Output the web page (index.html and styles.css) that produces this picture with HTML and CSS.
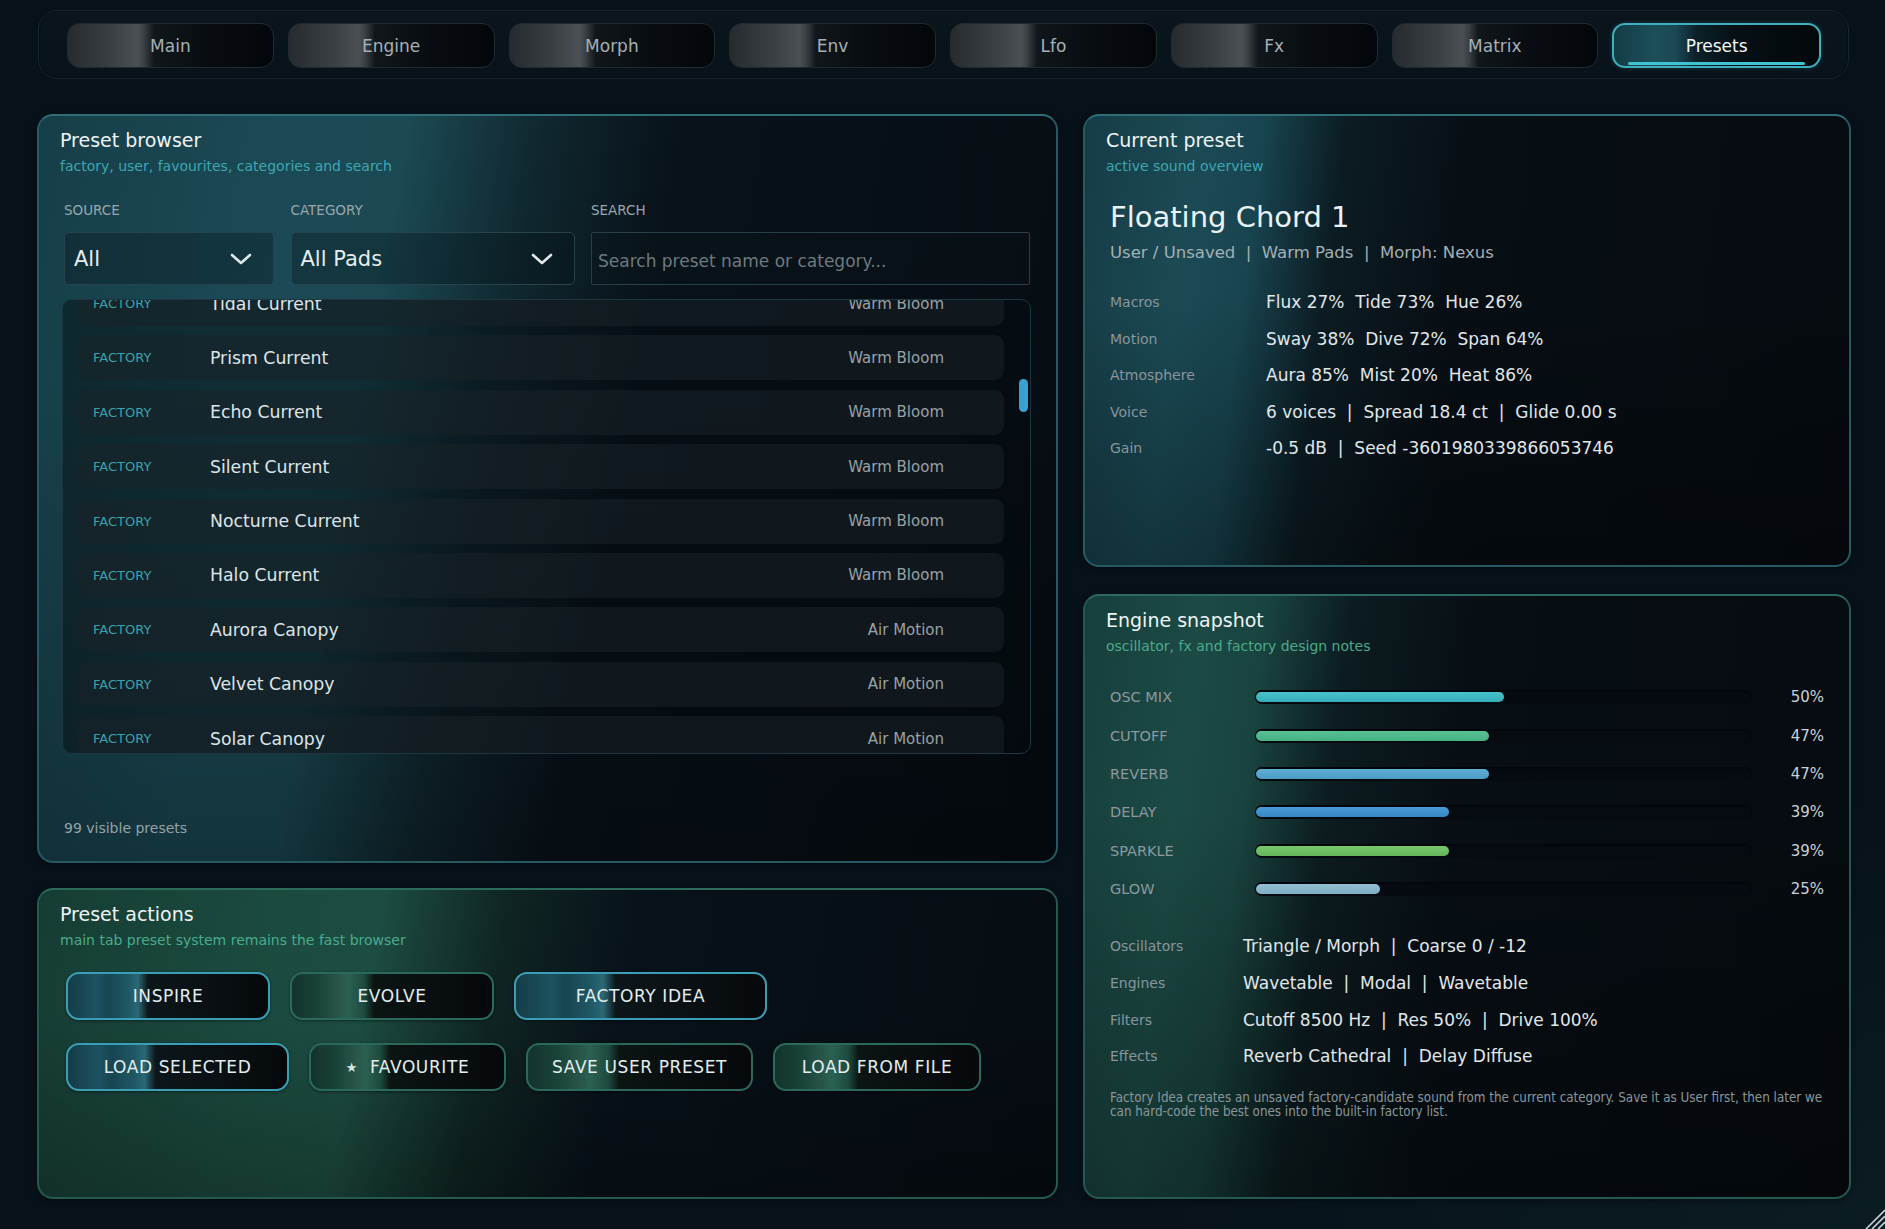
FILE: index.html
```html
<!DOCTYPE html>
<html lang="en">
<head>
<meta charset="utf-8">
<title>Presets</title>
<link rel="stylesheet" href="styles.css">
</head>
<body>
<div class="app">
  <nav class="tabbar">
    <div class="tab">Main</div>
    <div class="tab">Engine</div>
    <div class="tab">Morph</div>
    <div class="tab">Env</div>
    <div class="tab">Lfo</div>
    <div class="tab">Fx</div>
    <div class="tab">Matrix</div>
    <div class="tab active">Presets</div>
  </nav>

  <main class="layout">
    <div class="col col-left">
      <section class="panel browser">
        <h2 class="p-title">Preset browser</h2>
        <p class="p-sub">factory, user, favourites, categories and search</p>

        <div class="filters">
          <div class="field">
            <div class="f-label">SOURCE</div>
            <div class="select"><span>All</span>
              <svg class="chev" viewBox="0 0 22 12" width="22" height="12"><path d="M2 2 L11 10 L20 2" fill="none" stroke="#dfe8ea" stroke-width="2.6" stroke-linecap="round" stroke-linejoin="round"/></svg>
            </div>
          </div>
          <div class="field">
            <div class="f-label">CATEGORY</div>
            <div class="select"><span>All Pads</span>
              <svg class="chev" viewBox="0 0 22 12" width="22" height="12"><path d="M2 2 L11 10 L20 2" fill="none" stroke="#dfe8ea" stroke-width="2.6" stroke-linecap="round" stroke-linejoin="round"/></svg>
            </div>
          </div>
          <div class="field">
            <div class="f-label">SEARCH</div>
            <input class="search" type="text" placeholder="Search preset name or category...">
          </div>
        </div>

        <div class="list">
          <div class="rows">
            <div class="row"><span class="src">FACTORY</span><span class="name">Tidal Current</span><span class="cat">Warm Bloom</span></div>
            <div class="row"><span class="src">FACTORY</span><span class="name">Prism Current</span><span class="cat">Warm Bloom</span></div>
            <div class="row"><span class="src">FACTORY</span><span class="name">Echo Current</span><span class="cat">Warm Bloom</span></div>
            <div class="row"><span class="src">FACTORY</span><span class="name">Silent Current</span><span class="cat">Warm Bloom</span></div>
            <div class="row"><span class="src">FACTORY</span><span class="name">Nocturne Current</span><span class="cat">Warm Bloom</span></div>
            <div class="row"><span class="src">FACTORY</span><span class="name">Halo Current</span><span class="cat">Warm Bloom</span></div>
            <div class="row"><span class="src">FACTORY</span><span class="name">Aurora Canopy</span><span class="cat">Air Motion</span></div>
            <div class="row"><span class="src">FACTORY</span><span class="name">Velvet Canopy</span><span class="cat">Air Motion</span></div>
            <div class="row"><span class="src">FACTORY</span><span class="name">Solar Canopy</span><span class="cat">Air Motion</span></div>
          </div>
          <div class="thumb"></div>
        </div>

        <div class="count">99 visible presets</div>
      </section>

      <section class="panel actions">
        <h2 class="p-title">Preset actions</h2>
        <p class="p-sub green">main tab preset system remains the fast browser</p>
        <div class="btn-grid">
          <div class="btn-row row-a">
            <div class="btn blue">INSPIRE</div>
            <div class="btn green">EVOLVE</div>
            <div class="btn blue">FACTORY IDEA</div>
          </div>
          <div class="btn-row row-b">
            <div class="btn blue">LOAD SELECTED</div>
            <div class="btn green"><span class="star">★</span>FAVOURITE</div>
            <div class="btn green">SAVE USER PRESET</div>
            <div class="btn green">LOAD FROM FILE</div>
          </div>
        </div>
      </section>
    </div>

    <div class="col col-right">
      <section class="panel current">
        <h2 class="p-title">Current preset</h2>
        <p class="p-sub">active sound overview</p>
        <div class="big">Floating Chord 1</div>
        <div class="meta">User / Unsaved  |  Warm Pads  |  Morph: Nexus</div>
        <div class="kv">
          <div class="kv-row"><span class="k">Macros</span><span class="v">Flux 27%  Tide 73%  Hue 26%</span></div>
          <div class="kv-row"><span class="k">Motion</span><span class="v">Sway 38%  Dive 72%  Span 64%</span></div>
          <div class="kv-row"><span class="k">Atmosphere</span><span class="v">Aura 85%  Mist 20%  Heat 86%</span></div>
          <div class="kv-row"><span class="k">Voice</span><span class="v">6 voices  |  Spread 18.4 ct  |  Glide 0.00 s</span></div>
          <div class="kv-row"><span class="k">Gain</span><span class="v">-0.5 dB  |  Seed -3601980339866053746</span></div>
        </div>
      </section>

      <section class="panel engine">
        <h2 class="p-title">Engine snapshot</h2>
        <p class="p-sub green">oscillator, fx and factory design notes</p>
        <div class="bars">
          <div class="bar-row"><span class="b-label">OSC MIX</span><div class="track"><div class="fill c-osc" style="width:50%"></div></div><span class="b-val">50%</span></div>
          <div class="bar-row"><span class="b-label">CUTOFF</span><div class="track"><div class="fill c-cut" style="width:47%"></div></div><span class="b-val">47%</span></div>
          <div class="bar-row"><span class="b-label">REVERB</span><div class="track"><div class="fill c-rev" style="width:47%"></div></div><span class="b-val">47%</span></div>
          <div class="bar-row"><span class="b-label">DELAY</span><div class="track"><div class="fill c-del" style="width:39%"></div></div><span class="b-val">39%</span></div>
          <div class="bar-row"><span class="b-label">SPARKLE</span><div class="track"><div class="fill c-spk" style="width:39%"></div></div><span class="b-val">39%</span></div>
          <div class="bar-row"><span class="b-label">GLOW</span><div class="track"><div class="fill c-glw" style="width:25%"></div></div><span class="b-val">25%</span></div>
        </div>
        <div class="info">
          <div class="info-row"><span class="k">Oscillators</span><span class="v">Triangle / Morph  |  Coarse 0 / -12</span></div>
          <div class="info-row"><span class="k">Engines</span><span class="v">Wavetable  |  Modal  |  Wavetable</span></div>
          <div class="info-row"><span class="k">Filters</span><span class="v">Cutoff 8500 Hz  |  Res 50%  |  Drive 100%</span></div>
          <div class="info-row"><span class="k">Effects</span><span class="v">Reverb Cathedral  |  Delay Diffuse</span></div>
        </div>
        <p class="note">Factory Idea creates an unsaved factory-candidate sound from the current category. Save it as User first, then later we<br>can hard-code the best ones into the built-in factory list.</p>
      </section>
    </div>
  </main>
</div>
<svg class="grip" viewBox="0 0 22 22" width="22" height="22">
  <path d="M22 3 L3 22 M22 9 L9 22 M22 15 L15 22" stroke="#c9d1d5" stroke-width="1.6" fill="none"/>
</svg>
</body>
</html>
```

FILE: styles.css
```css
* { box-sizing: border-box; }

html, body {
  margin: 0;
  padding: 0;
}

body {
  width: 1885px;
  height: 1229px;
  overflow: hidden;
  position: relative;
  background: radial-gradient(60% 50% at 100% 100%, #0b1c22 0%, #07111a 70%), #07111a;
  font-family: "DejaVu Sans", Verdana, sans-serif;
  color: #dfe7ea;
}

.app {
  width: 1885px;
  height: 1229px;
  padding: 10px 34px 0 37px;
  display: flex;
  flex-direction: column;
}

/* ---------- Tabs ---------- */
.tabbar {
  height: 69px;
  margin: 0 2px 0 1px;
  padding: 12px 27px 12px 28px;
  display: flex;
  gap: 14px;
  border: 1px solid #16262e;
  border-radius: 20px;
  background: linear-gradient(180deg, #0a151c 0%, #08121a 100%);
  box-shadow: inset 0 0 0 1px rgba(0, 0, 0, 0.35);
}

.tab {
  flex: 1;
  height: 45px;
  display: flex;
  align-items: center;
  justify-content: center;
  font-size: 17px;
  color: #a6b0b5;
  border: 1px solid #1f2b31;
  border-radius: 13px;
  background: linear-gradient(90deg, #262b2f 0%, #3a4044 22%, #4a5054 34%, #3a4044 37%, #10161a 42%, #080c10 70%, #04070a 100%);
}

.tab.active {
  position: relative;
  color: #f2f8f9;
  border: 2px solid #3cb0be;
  background: linear-gradient(90deg, #143c45 0%, #1c4f5a 20%, #1a4853 30%, #0c2129 40%, #061015 60%, #04080b 100%);
  box-shadow: 0 0 5px rgba(60, 176, 190, 0.25);
}

.tab.active::after {
  content: "";
  position: absolute;
  left: 14px;
  right: 14px;
  bottom: 1px;
  height: 3px;
  border-radius: 2px;
  background: #3fc2d2;
}

/* ---------- Layout ---------- */
.layout {
  margin-top: 35px;
  height: 1085px;
  display: grid;
  grid-template-columns: 1021px 1fr;
  column-gap: 25px;
}

.col {
  display: flex;
  flex-direction: column;
  min-height: 0;
}
.col-left { gap: 25px; }
.col-right { gap: 27px; }

.panel {
  position: relative;
  border-radius: 16px;
  border: 2px solid #265a62;
  border-top-color: #2e6e76;
  padding: 13px 22px 0 21px;
  overflow: hidden;
  box-shadow: 0 2px 6px rgba(0, 0, 0, 0.4);
}

.browser {
  height: 749px;
  flex: none;
  display: flex;
  flex-direction: column;
  background:
    linear-gradient(180deg, rgba(0,0,0,0) 35%, rgba(0,0,0,0.3) 100%),
    linear-gradient(100deg, #163e48 0%, #1b4a56 22%, #1b4a55 32%, #10272f 44%, #08121a 56%, #060c12 100%);
}

.actions {
  flex: 1;
  border-color: #245a4c;
  border-top-color: #2c6a5a;
  background:
    linear-gradient(180deg, rgba(0,0,0,0) 40%, rgba(0,0,0,0.25) 100%),
    linear-gradient(100deg, #163d34 0%, #1b4a3f 22%, #1d4d42 32%, #0f2523 44%, #08121a 56%, #060c12 100%);
}

.current {
  height: 453px;
  flex: none;
  background:
    linear-gradient(180deg, rgba(0,0,0,0) 40%, rgba(0,0,0,0.3) 100%),
    linear-gradient(97deg, #163c46 0%, #1b4a55 14%, #184450 22%, #0c1c23 32%, #070e14 48%, #060b10 100%);
}

.engine {
  flex: 1;
  border-color: #245850;
  border-top-color: #2c6a60;
  background:
    linear-gradient(180deg, rgba(0,0,0,0) 35%, rgba(0,0,0,0.3) 100%),
    linear-gradient(97deg, #173f3c 0%, #1c4a45 14%, #19433f 22%, #0c1c20 32%, #070e14 48%, #060b10 100%);
}

.p-title {
  margin: 0;
  font-size: 19px;
  line-height: 23px;
  font-weight: normal;
  color: #eef4f5;
}

.p-sub {
  margin: 6px 0 0 0;
  font-size: 14px;
  line-height: 17px;
  color: #3fa6b0;
}
.p-sub.green { color: #4aab8c; }

/* ---------- Filters ---------- */
.filters {
  margin: 27px 4px 0 4px;
  display: grid;
  grid-template-columns: 210px 284px 1fr;
  column-gap: 16.5px;
}

.f-label {
  font-size: 13.5px;
  line-height: 17px;
  color: #9aa6ab;
  margin-bottom: 13px;
}

.select {
  height: 53px;
  display: flex;
  align-items: center;
  justify-content: space-between;
  padding: 0 21px 0 9px;
  border: 1px solid #27444d;
  border-radius: 5px;
  background: rgba(6, 16, 22, 0.35);
  font-size: 21px;
  color: #e6eef0;
}

.chev { display: block; }

.search {
  width: 100%;
  height: 53px;
  padding: 4px 6px 0 6px;
  border: 1px solid #29404a;
  border-radius: 2px;
  background: rgba(10, 20, 26, 0.4);
  font-family: "DejaVu Sans", Verdana, sans-serif;
  font-size: 17px;
  color: #dfe7ea;
  outline: none;
}
.search::placeholder { color: #6c7a80; }

/* ---------- List ---------- */
.list {
  position: relative;
  margin: 14px 3px 0 2px;
  height: 455px;
  padding: 0 26px 0 15px;
  border: 1px solid #1d3640;
  border-radius: 10px;
  background: rgba(4, 10, 15, 0.45);
  overflow: hidden;
}

.rows {
  margin-top: -19px;
  display: flex;
  flex-direction: column;
  gap: 9.4px;
}

.row {
  height: 45px;
  flex: none;
  display: flex;
  align-items: center;
  padding: 0 60px 0 15px;
  border-radius: 9px;
  background: rgba(26, 34, 40, 0.55);
}

.src {
  width: 117px;
  flex: none;
  font-size: 13px;
  color: #3aa2a9;
}

.name {
  flex: 1;
  font-size: 17.3px;
  color: #dde5e8;
}

.cat {
  font-size: 15px;
  color: #98a2a7;
}

.thumb {
  position: absolute;
  right: 2px;
  top: 79px;
  width: 9px;
  height: 33px;
  border-radius: 5px;
  background: #3a9fd2;
}

.count {
  margin: auto 0 0 4px;
  padding-bottom: 24px;
  font-size: 14px;
  line-height: 17px;
  color: #97a2a7;
}

/* ---------- Buttons ---------- */
.btn-grid {
  margin: 23px 0 0 6px;
  display: flex;
  flex-direction: column;
  gap: 23px;
}

.btn-row {
  display: grid;
  column-gap: 20px;
}
.row-a { grid-template-columns: 204px 204px 253px; }
.row-b { grid-template-columns: 223px 197px 227px 208px; }

.btn {
  height: 48px;
  display: flex;
  align-items: center;
  justify-content: center;
  border-radius: 13px;
  font-size: 17px;
  letter-spacing: 0.6px;
  color: #e2eeef;
  box-shadow: 0 1px 3px rgba(0, 0, 0, 0.45);
}

.btn.blue {
  border: 2px solid #3a9fb6;
  background: linear-gradient(90deg, #143c47 0%, #1d5260 14%, #174551 20%, #1f5765 30%, #2a6874 35%, #0c171b 40%, #0a1013 70%, #06090c 100%);
}

.btn.green {
  border: 2px solid #2b6a5a;
  background: linear-gradient(90deg, #13332d 0%, #1a4439 14%, #244f44 20%, #2b6152 28%, #1c4a3f 36%, #0b1512 41%, #090e10 70%, #06090b 100%);
}

.star {
  font-size: 13px;
  margin-right: 12px;
  color: #d7e6e3;
}

/* ---------- Current preset ---------- */
.big {
  margin: 25px 0 0 4px;
  font-size: 29px;
  line-height: 34px;
  color: #e9f2f4;
}

.meta {
  margin: 9px 0 0 4px;
  font-size: 16.5px;
  line-height: 20px;
  color: #a4b0b5;
  white-space: pre;
}

.kv {
  margin: 20.75px 0 0 4px;
}

.kv-row, .info-row {
  display: flex;
  align-items: center;
}
.kv-row { height: 36.5px; }
.info-row { height: 36.7px; }

.k {
  font-size: 14px;
  color: #88959b;
  flex: none;
}
.kv-row .k { width: 156px; }
.info-row .k { width: 133px; }

.v {
  font-size: 17px;
  color: #e0e7ea;
  white-space: pre;
}

/* ---------- Engine snapshot ---------- */
.bars {
  margin: 23px 3px 0 4px;
}

.bar-row {
  height: 38.4px;
  display: grid;
  grid-template-columns: 145px 497px 1fr;
  align-items: center;
}

.b-label {
  font-size: 14.5px;
  color: #8c989e;
}

.track {
  height: 14px;
  padding: 2px 0 2px 1px;
  border-radius: 7px;
  background: #050b10;
  box-shadow: inset 0 1px 2px rgba(0, 0, 0, 0.6);
}

.fill {
  height: 10px;
  border-radius: 5px;
}
.c-osc { background: linear-gradient(180deg, #48c2cc, #35adb8); }
.c-cut { background: linear-gradient(180deg, #58c294, #45b080); }
.c-rev { background: linear-gradient(180deg, #5eaed4, #4c9bc4); }
.c-del { background: linear-gradient(180deg, #489bd8, #3786c4); }
.c-spk { background: linear-gradient(180deg, #78c86c, #64b45a); }
.c-glw { background: linear-gradient(180deg, #93bed2, #80aec4); }

.b-val {
  text-align: right;
  font-size: 15px;
  color: #c8d2d6;
}

.info {
  margin: 19.5px 0 0 4px;
}

.note {
  margin: 16.6px 3px 0 4px;
  font-family: "DejaVu Sans Condensed", "DejaVu Sans", sans-serif;
  font-stretch: condensed;
  font-size: 13.3px;
  line-height: 14px;
  color: #8a969b;
  white-space: nowrap;
}

/* ---------- Resize grip ---------- */
.grip {
  position: absolute;
  right: 0;
  bottom: 0;
  display: block;
}
```
